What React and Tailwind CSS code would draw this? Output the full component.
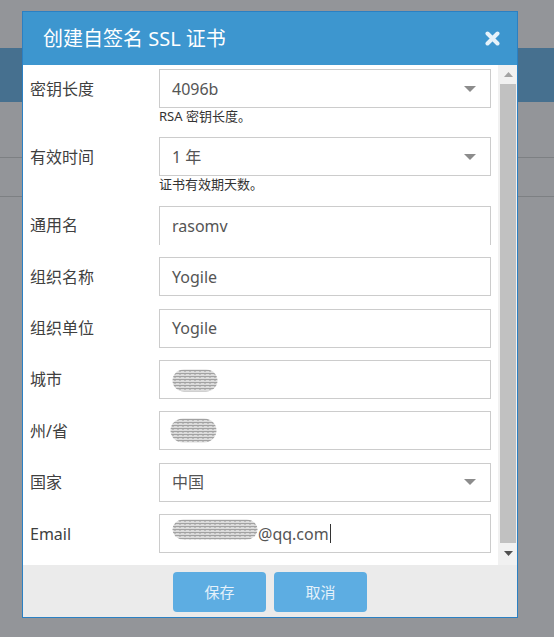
import React from "react";

function Blob({ w, h, id, className = "" }) {
  return (
    <svg width={w} height={h} viewBox={`0 0 ${w} ${h}`} className={className}>
      <defs>
        <pattern id={id} width="5" height="3" patternUnits="userSpaceOnUse">
          <rect width="5" height="3" fill="#dcdcdc" />
          <rect y="1" width="5" height="1" fill="#a2a2a2" />
          <rect x="2" y="2" width="2" height="1" fill="#bdbdbd" />
        </pattern>
      </defs>
      <rect x="0.5" y="0.5" width={w - 1} height={h - 1} rx={h / 2} fill={`url(#${id})`} />
    </svg>
  );
}

function Arrow() {
  return (
    <svg width="12" height="6" viewBox="0 0 12 6" className="absolute right-[14px] top-1/2 -translate-y-1/2">
      <path d="M0 0H12L6 6Z" fill="#8c8c8c" />
    </svg>
  );
}

function Row({ label, help, children }) {
  return (
    <div className="flex mb-[12.4px]">
      <div className="w-[129px] h-[39px] flex items-center text-[16px] text-[#404040]">{label}</div>
      <div className="w-[332px]">
        {children}
        {help && (
          <div className="h-[17px] text-[13px] leading-[17px] text-[#333]">{help}</div>
        )}
      </div>
    </div>
  );
}

const box =
  "relative h-[39px] border border-[#cccccc] flex items-center pl-[12px] text-[16px] text-[#555]";

export default function App() {
  return (
    <div className="relative w-[554px] h-[637px] overflow-hidden bg-[#939599] font-['Noto_Sans','Noto_Sans_CJK_SC',sans-serif]">
      <div className="h-[48px]" />
      <div className="h-[54px] bg-[#46708f]" />
      <div className="h-[55px]" />
      <div className="h-px bg-[#7d8083]" />
      <div className="h-[38px]" />
      <div className="h-px bg-[#7d8083]" />

      <div className="absolute left-[22px] top-[11px] w-[496px] h-[607px] border border-[#2b80c3] flex flex-col bg-white">
        <div className="h-[53px] shrink-0 bg-[#3d96cf] flex items-center justify-between pl-[20px] pr-[17px]">
          <span className="text-[20px] text-white leading-none">创建自签名 SSL 证书</span>
          <svg width="15" height="15" viewBox="0 0 15 15">
            <path d="M2.5 2.5L12.5 12.5M12.5 2.5L2.5 12.5" stroke="#e6f2fa" strokeWidth="4" strokeLinecap="round" />
          </svg>
        </div>

        <div className="h-[500px] shrink-0 flex">
          <div className="flex-1 pt-[4px] pl-[7px] pr-[7px]">
            <Row label="密钥长度" help="RSA 密钥长度。">
              <div className={box}>
                4096b
                <Arrow />
              </div>
            </Row>
            <Row label="有效时间" help="证书有效期天数。">
              <div className={box}>
                1 年
                <Arrow />
              </div>
            </Row>
            <Row label="通用名">
              <div className={box + " border-b-0"}>rasomv</div>
            </Row>
            <Row label="组织名称">
              <div className={box}>Yogile</div>
            </Row>
            <Row label="组织单位">
              <div className={box}>Yogile</div>
            </Row>
            <Row label="城市">
              <div className={box}>
                <Blob w={46} h={23} id="b1" className="mt-[2px]" />
              </div>
            </Row>
            <Row label="州/省">
              <div className={box}>
                <Blob w={47} h={25} id="b2" className="-ml-[2px]" />
              </div>
            </Row>
            <Row label="国家">
              <div className={box}>
                中国
                <Arrow />
              </div>
            </Row>
            <Row label="Email">
              <div className={box + " border-[#5dade2]"}>
                <Blob w={86} h={21} id="b3" className="-mt-[9px]" />
                <span>@qq.com</span>
                <span className="w-px h-[19px] bg-[#333] ml-[1px]" />
              </div>
            </Row>
          </div>

          <div className="w-[19px] bg-[#f1f1f1] flex flex-col pl-[2px]">
            <div className="h-[19px] flex items-center justify-center">
              <svg width="9" height="5" viewBox="0 0 9 5">
                <path d="M0 5H9L4.5 0Z" fill="#a3a3a3" />
              </svg>
            </div>
            <div className="h-[459px] w-[16px] bg-[#c1c1c1]" />
            <div className="flex-1 flex justify-center pt-[8px]">
              <svg width="9" height="5" viewBox="0 0 9 5">
                <path d="M0 0H9L4.5 5Z" fill="#505050" />
              </svg>
            </div>
          </div>
        </div>

        <div className="flex-1 bg-[#ebebeb] flex justify-center gap-[8px] pt-[7px]">
          <button className="w-[93px] h-[40px] rounded-[4px] bg-[#5dade2] text-[15px] text-[#e4f1fa]">保存</button>
          <button className="w-[93px] h-[40px] rounded-[4px] bg-[#5dade2] text-[15px] text-[#e4f1fa]">取消</button>
        </div>
      </div>
    </div>
  );
}
